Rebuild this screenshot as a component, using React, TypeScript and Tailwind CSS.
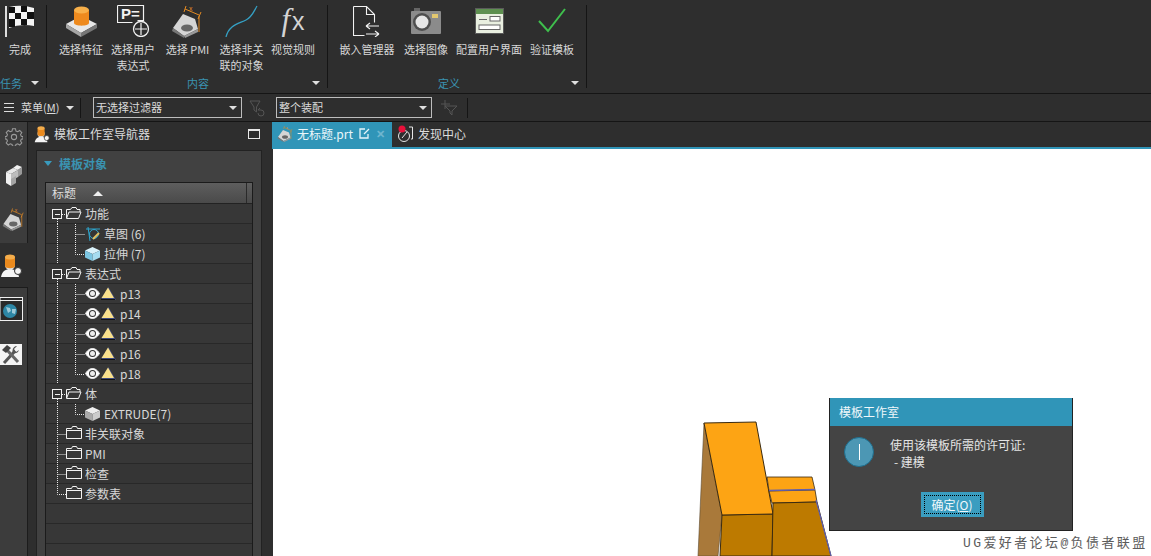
import React from 'react';

const FONT = "font-['Noto_Sans_CJK_SC','Noto_Sans',sans-serif]";

const Flag = () => (
  <svg width="30" height="32" viewBox="0 0 30 32">
    <rect x="0" y="1" width="2" height="31" fill="#ddd" />
    <path d="M4 2 Q16 -1 29 3 L29 21 Q16 18 4 23Z" fill="#f4f4f4" />
    <path d="M4 2h6v6H4zM16 1h6v6h-6zM10 8h6v6h-6zM22 7h7v7h-7zM4 14h6v8H4zM16 14h6v6h-6z" fill="#111" />
  </svg>
);

const Feature = () => (
  <svg width="33" height="32" viewBox="0 0 33 32">
    <path d="M1 19 L16 11 L32 19 L16 28Z" fill="#e8e8e8" />
    <path d="M1 19 L16 28 L16 32 L1 23Z" fill="#a5a5a5" />
    <path d="M32 19 L16 28 L16 32 L32 23Z" fill="#777" />
    <path d="M9 5v13c0 3.500 15 3.500 15 0V5Z" fill="#ee8a1e" />
    <ellipse cx="16.500" cy="5" rx="7.500" ry="3.500" fill="#f8b04a" />
  </svg>
);

const ExprPick = () => (
  <svg width="33" height="32" viewBox="0 0 33 32" fill="none" stroke="#f2f2f2">
    <path d="M.5 .5h26v15h-6M.5 .5v17h15" strokeWidth="1.200" />
    <text x="4" y="14" fill="#f2f2f2" stroke="none" fontSize="15" fontWeight="700" fontFamily="Liberation Sans">P=</text>
    <circle cx="24" cy="24" r="7.500" strokeWidth="1.300" />
    <path d="M24 18v12M18 24h12" strokeWidth="1.200" />
  </svg>
);

const Pmi = ({ size = 34 }: { size?: number }) => (
  <svg width={size} height={size} viewBox="0 0 34 34">
    <path d="M2 24 L12 10 L24 15 L27 25 L13 32Z" fill="#d5d5d5" />
    <path d="M2 24 L13 32 L13 34 L1 27Z" fill="#777" />
    <path d="M13 32 L27 25 L27 28 L14 34Z" fill="#999" />
    <ellipse cx="16" cy="24" rx="6" ry="3.500" fill="#666" />
    <path d="M14 5 L28 11M15 2 L13 8M30 8 L27 15M28 12 V28" stroke="#e38a23" strokeWidth="1" fill="none" />
    <text x="18" y="7" fill="#e38a23" fontSize="7" fontFamily="Liberation Sans">x</text>
  </svg>
);

const Curve = () => (
  <svg width="36" height="32" viewBox="0 0 36 32" fill="none">
    <path d="M2 32 C5 20 14 19 22 15 C28 12 30 6 33 1" stroke="#35a0c4" strokeWidth="1.300" />
  </svg>
);

const FxMark = () => (
  <span className="text-[#d4d4d4] leading-[32px] whitespace-nowrap">
    <span className="font-['Liberation_Serif'] italic text-[31px]">f</span>
    <span className="font-['Liberation_Sans'] font-light text-[25px] ml-[2px]">x</span>
  </span>
);

const DocEmbed = () => (
  <svg width="28" height="31" viewBox="0 0 28 31" fill="none" stroke="#f2f2f2" strokeWidth="1.100">
    <path d="M.5 .5h13l8 8v8M13.500 .5v8h8M.5 .5v29h11" />
    <path d="M13 20h13M13 20l4-3M13 20l4 3M13 28h13M26 28l-4-3M26 28l-4 3" />
  </svg>
);

const Camera = () => (
  <svg width="32" height="26" viewBox="0 0 32 26">
    <rect x="4" y="0" width="6" height="5" fill="#666" />
    <rect x="1" y="3" width="30" height="23" rx="1" fill="#8b8b8b" />
    <circle cx="12" cy="14" r="9" fill="#4e4e4e" />
    <circle cx="12" cy="14" r="6.500" fill="#e6e6e6" />
    <rect x="22" y="6" width="6" height="4" fill="#e3c870" />
  </svg>
);

const UiWindow = () => (
  <svg width="29" height="26" viewBox="0 0 29 26">
    <rect x="0.500" y="0.500" width="28" height="25" fill="#e9efe0" stroke="#5a5a5a" />
    <rect x="1" y="1" width="27" height="5" fill="#5e9050" />
    <path d="M4 11h8v1H4z" fill="#666" />
    <rect x="15" y="8.500" width="10" height="4.500" fill="#fff" stroke="#666" />
    <rect x="4" y="17" width="21" height="4.500" fill="#fff" stroke="#666" />
  </svg>
);

const Check = () => (
  <svg width="30" height="28" viewBox="0 0 30 28" fill="none">
    <path d="M2 14 L11 24 L28 2" stroke="#3fbf4d" strokeWidth="2" />
  </svg>
);

const Caret = () => <span className="inline-block border-x-[4px] border-t-[4px] border-x-transparent border-t-[#e0e0e0]" />;

type RibbonItem = { w: string; lines: string[]; icon: React.ReactNode };

const GROUP_2: RibbonItem[] = [
  { w: 'w-[52px]', lines: ['选择特征'], icon: <Feature /> },
  { w: 'w-[52px]', lines: ['选择用户', '表达式'], icon: <ExprPick /> },
  { w: 'w-[57px]', lines: ['选择 PMI'], icon: <Pmi /> },
  { w: 'w-[51px]', lines: ['选择非关', '联的对象'], icon: <Curve /> },
  { w: 'w-[52px]', lines: ['视觉规则'], icon: <FxMark /> },
];

const GROUP_3: RibbonItem[] = [
  { w: 'w-[60px]', lines: ['嵌入管理器'], icon: <DocEmbed /> },
  { w: 'w-[58px]', lines: ['选择图像'], icon: <Camera /> },
  { w: 'w-[68px]', lines: ['配置用户界面'], icon: <UiWindow /> },
  { w: 'w-[58px]', lines: ['验证模板'], icon: <Check /> },
];

function RibbonButton({ item }: { item: RibbonItem }) {
  return (
    <div className={`${item.w} flex flex-col items-center shrink-0`}>
      <div className="h-[36px] pb-[4px] flex items-center justify-center">{item.icon}</div>
      <div className="text-[11px] leading-[16px] text-center text-[#d8d8d8] whitespace-nowrap">
        {item.lines.map((l) => (
          <div key={l}>{l}</div>
        ))}
      </div>
    </div>
  );
}

function RibbonGroup({ width, pad, label, labelClass, items, children }: { width: string; pad: string; label: string; labelClass: string; items?: RibbonItem[]; children?: React.ReactNode }) {
  return (
    <div className={`${width} h-[83px] mt-[5px] border-r border-[#151515] flex flex-col shrink-0`}>
      <div className={`${pad} h-[71px] flex`}>
        {items?.map((i) => <RibbonButton key={i.lines[0]} item={i} />)}
        {children}
      </div>
      <div className="relative h-[12px] text-[11px] leading-[15px] text-[#3a93b1]">
        <span className={labelClass}>{label}</span>
        <span className="absolute right-[7px] top-[5px] flex"><Caret /></span>
      </div>
    </div>
  );
}

function Ribbon() {
  return (
    <div className="h-[94px] bg-[#2e2e2e] border-b border-[#151515] flex">
      <RibbonGroup width="w-[47px]" pad="pl-[3px]" label="任务" labelClass="block" items={undefined}>
        <div className="w-[34px] flex flex-col items-center">
          <div className="h-[36px] pb-[4px] flex items-center"><Flag /></div>
          <div className="text-[11px] leading-[16px] text-[#d8d8d8] whitespace-nowrap">完成</div>
        </div>
      </RibbonGroup>
      <RibbonGroup width="w-[281px]" pad="pl-[8px]" label="内容" labelClass="block text-center pl-[22px]" items={GROUP_2} />
      <RibbonGroup width="w-[259px]" pad="pl-[9px]" label="定义" labelClass="block text-center pr-[16px]" items={GROUP_3} />
    </div>
  );
}

function Toolbar() {
  return (
    <div className="h-[28px] bg-[#2e2e2e] border-b border-[#151515] flex items-center text-[#dcdcdc] text-[11px]">
      <svg width="10" height="9" viewBox="0 0 10 9" className="ml-[4px]" stroke="#ddd"><path d="M0 .5h10M0 4.500h10M0 8.500h10" /></svg>
      <span className="ml-[7px] w-[45px] whitespace-nowrap">菜单(<span className="underline">M</span>)</span>
      <Caret />
      <span className="ml-[6px] w-px h-[20px] bg-[#151515]" />
      <div className="ml-[12px] w-[149px] h-[21px] border border-[#bdbdbd] flex items-center justify-between pl-[2px] pr-[4px]">
        <span>无选择过滤器</span><Caret />
      </div>
      <svg width="18" height="18" viewBox="0 0 18 18" className="ml-[7px]" fill="none" stroke="#555"><path d="M1 2h10L7.500 8v5L5 11V8ZM9 14a3 3 0 1 0 3-3H9l2-2" /></svg>
      <div className="ml-[9px] w-[156px] h-[21px] border border-[#bdbdbd] flex items-center justify-between pl-[2px] pr-[4px]">
        <span>整个装配</span><Caret />
      </div>
      <svg width="18" height="18" viewBox="0 0 18 18" className="ml-[8px]" fill="none" stroke="#555"><path d="M1 5h9M5 1v9M5 7h12l-5 5v4l-2-2v-2Z" /></svg>
      <span className="ml-[9px] w-px h-[20px] bg-[#151515]" />
    </div>
  );
}

const Gear = () => (
  <svg width="18" height="18" viewBox="0 0 24 24" fill="none" stroke="#9a9a9a" strokeWidth="1.400">
    <circle cx="12" cy="12" r="3.500" />
    <path d="M10 1h4l.6 3 2.400 1 2.600-1.700 2.800 2.800L20.700 8.700l1 2.300 2.300.5v3l-2.300.5-1 2.300 1.700 2.600-2.800 2.800-2.600-1.700-2.400 1-.6 2.500h-4l-.6-2.500-2.400-1-2.600 1.700-2.800-2.800 1.700-2.600-1-2.300-2.300-.5v-3l2.300-.5 1-2.300-1.700-2.600 2.800-2.800L7 5l2.400-1Z" />
  </svg>
);

const Blocks = () => (
  <svg width="16" height="21" viewBox="0 0 16 21">
    <path d="M7 3 11 0 16 2 12 5Z" fill="#f2f2f2" />
    <path d="M12 5 16 2V9L12 12Z" fill="#999" />
    <path d="M0 7 7 3 12 5 5 9Z" fill="#e8e8e8" />
    <path d="M5 9 12 5V12L5 16Z" fill="#bdbdbd" />
    <path d="M0 7 5 9V21L0 18Z" fill="#f0f0f0" />
    <path d="M5 14 10 11V18L5 21Z" fill="#a5a5a5" />
  </svg>
);

const UserTool = ({ size = 24 }: { size?: number }) => (
  <svg width={size} height={size} viewBox="0 0 24 24">
    <path d="M1 23c1-6 5-8 9-8s8 2 9 8Z" fill="#f5f5f5" />
    <circle cx="10" cy="11" r="5" fill="#e0e0e0" />
    <path d="M5 3v9c0 3 10 3 10 0V3Z" fill="#ea8a1e" />
    <ellipse cx="10" cy="3" rx="5" ry="2.500" fill="#f4ad4b" />
    <circle cx="18" cy="17" r="3.500" fill="#f5f5f5" stroke="#333" />
  </svg>
);

const GlobeWindow = () => (
  <svg width="23" height="24" viewBox="0 0 23 24">
    <rect x="0" y="0.500" width="22.500" height="23" fill="#2a2a2a" stroke="#f0f0f0" />
    <path d="M0 3.500h23" stroke="#f0f0f0" />
    <circle cx="10" cy="14" r="7" fill="#2d87a6" />
    <path d="M6 10l4 1 1 3-3 2zM12 12l4 0-1 5-3-1z" fill="#9cc9d8" />
  </svg>
);

const Tools = () => (
  <svg width="22" height="21" viewBox="0 0 22 21">
    <rect width="22" height="21" fill="#f4f4f4" />
    <path d="M4 19 15 7" stroke="#555" strokeWidth="3" />
    <path d="M13 9a5 5 0 0 1 3-7l1 0-3 3 2 3 3-2a5 5 0 0 1-6 3Z" fill="#555" />
    <path d="M18 18 7 6" stroke="#666" strokeWidth="3" />
    <path d="M2 6 7 1l4 3-5 5Z" fill="#444" />
  </svg>
);

function Sidebar() {
  return (
    <div className="w-[36px] flex flex-col shrink-0 bg-[#2e2e2e]">
      <div className="h-[121px] w-[28px] bg-[#3c3c3c] border-r border-[#1c1c1c] flex flex-col items-center">
        <div className="h-[30px] flex items-center"><Gear /></div>
        <div className="h-[46px] flex items-center"><Blocks /></div>
        <div className="h-[41px] flex items-center"><Pmi size={24} /></div>
      </div>
      <div className="h-[44px] w-[28px] flex items-center justify-start pt-[2px]"><UserTool /></div>
      <div className="flex-1 w-[28px] bg-[#3c3c3c] border-r border-t border-[#1c1c1c] flex flex-col items-start">
        <div className="mt-[9px]"><GlobeWindow /></div>
        <div className="mt-[23px]"><Tools /></div>
      </div>
    </div>
  );
}

const Folder = ({ open }: { open: boolean }) =>
  open ? (
    <g fill="none" stroke="#f2f2f2">
      <path d="M20.500 14V5.500h4l1.500-2h4l1 2h3v2.500" />
      <path d="M20.500 14.500h12l2.500-6.500h-12l-2.500 6.500" />
    </g>
  ) : (
    <g fill="none" stroke="#f2f2f2">
      <path d="M20.500 4.500h5l1-2h4l1 2h4v10h-15Z" />
      <path d="M20.500 6.500h15" />
    </g>
  );

// one row's connectors: kind picks the dotted lines drawn in the 39px gutter
function Guide({ kind, last }: { kind: 'root' | 'plain' | 'child'; last?: boolean }) {
  const dot = { stroke: '#e8e8e8', strokeDasharray: '1 1', fill: 'none' };
  return (
    <svg width="39" height="20" viewBox="0 0 39 20" className="shrink-0">
      {kind === 'root' && (
        <>
          <path d="M11.500 15v5" {...dot} />
          <rect x="6.500" y="5.500" width="9" height="9" fill="#333" stroke="#f0f0f0" />
          <path d="M9 10.500h5" stroke="#f0f0f0" />
          <path d="M16 10.500h4" {...dot} />
          <Folder open />
        </>
      )}
      {kind === 'plain' && (
        <>
          <path d={last ? 'M11.500 0v10.500h9' : 'M11.500 0v20M11.500 10.500h9'} {...dot} />
          <Folder open={false} />
        </>
      )}
      {kind === 'child' && (
        <>
          <path d="M11.500 0v20" {...dot} />
          <path d={last ? 'M29.500 0v10.500h9' : 'M29.500 0v20M29.500 10.500h9'} {...dot} />
        </>
      )}
    </svg>
  );
}

const Eye = () => (
  <svg width="15" height="11" viewBox="0 0 15 11" className="shrink-0">
    <path d="M.5 5.500C3 1.500 5.500.5 7.500.5s4.500 1 7 5c-2.500 4-5 5-7 5s-4.500-1-7-5Z" fill="#fff" stroke="#eee" />
    <circle cx="7.500" cy="5.500" r="3.500" fill="#333" />
    <circle cx="7.500" cy="5.500" r="2.500" fill="#eee" />
  </svg>
);

const Warn = () => (
  <svg width="15" height="13" viewBox="0 0 15 13" className="shrink-0 ml-px">
    <path d="M7.500 0 15 13H0Z" fill="#3e4a7c" />
    <path d="M7 0.500 13 11H0.500Z" fill="#f9e08c" />
    <path d="M0 12h14v1H0Z" fill="#111" />
  </svg>
);

const Sketch = () => (
  <svg width="16" height="16" viewBox="0 0 16 16" fill="none" stroke="#2ea7cf" className="shrink-0">
    <path d="M1 3h14M3 1l2 14" />
    <circle cx="9" cy="8" r="4.500" />
    <path d="M8 13l6-6" stroke="#e3c060" strokeWidth="2" />
  </svg>
);

const Extrude = ({ tint }: { tint: 'blue' | 'gray' }) => (
  <svg width="15" height="14" viewBox="0 0 15 14" className="shrink-0">
    <path d="M7.500 0 15 3.500 7.500 7 0 3.500Z" fill={tint === 'blue' ? '#d9f2fb' : '#eee'} />
    <path d="M0 3.500 7.500 7v7L0 10.500Z" fill={tint === 'blue' ? '#7cc6e2' : '#aaa'} />
    <path d="M15 3.500 7.500 7v7l7.500-3.500Z" fill={tint === 'blue' ? '#a6dcf0' : '#ccc'} />
  </svg>
);

type Row = { label: string; kind: 'root' | 'plain' | 'child'; last?: boolean; icons?: React.ReactNode };
const p = (label: string, last?: boolean): Row => ({
  label,
  kind: 'child',
  last,
  icons: <div className="flex items-center w-[35px]"><Eye /><Warn /></div>,
});

const ROWS: Row[] = [
  { label: '功能', kind: 'root' },
  { label: '草图 (6)', kind: 'child', icons: <div className="w-[19px]"><Sketch /></div> },
  { label: '拉伸 (7)', kind: 'child', last: true, icons: <div className="w-[19px]"><Extrude tint="blue" /></div> },
  { label: '表达式', kind: 'root' },
  p('p13'),
  p('p14'),
  p('p15'),
  p('p16'),
  p('p18', true),
  { label: '体', kind: 'root' },
  { label: 'EXTRUDE(7)', kind: 'child', last: true, icons: <div className="w-[19px]"><Extrude tint="gray" /></div> },
  { label: '非关联对象', kind: 'plain' },
  { label: 'PMI', kind: 'plain' },
  { label: '检查', kind: 'plain' },
  { label: '参数表', kind: 'plain', last: true },
];

function Navigator() {
  return (
    <div className="w-[236px] flex flex-col shrink-0 bg-[#2e2e2e]">
      <div className="h-[28px] pb-[4px] flex items-center">
        <div className="w-[18px] flex justify-start -ml-[2px]"><UserTool size={17} /></div>
        <span className="ml-[2px] flex-1 text-[12px] text-[#dcdcdc] whitespace-nowrap">模板工作室导航器</span>
        <span className="w-[12px] h-[10px] border border-[#e8e8e8] border-t-2 mr-[12px]" />
      </div>
      <div className="w-[226px] flex-1 bg-[#414141] border border-b-0 border-[#222] flex flex-col overflow-hidden">
        <div className="h-[31px] pb-[6px] flex items-center pl-[7px] shrink-0">
          <span className="border-x-[4px] border-t-[5px] border-x-transparent border-t-[#3a9bbd]" />
          <span className="ml-[7px] text-[12px] font-bold text-[#3a93b1]">模板对象</span>
        </div>
        <div className="ml-[8px] w-[208px] flex-1 bg-[#373737] border border-b-0 border-[#1b1b1b] flex flex-col">
          <div className="h-[21px] bg-gradient-to-b from-[#5e5e5e] to-[#4a4a4a] border-b border-[#222] flex items-center pl-[6px] text-[12px] text-[#dcdcdc] shrink-0 relative">
            标题
            <span className="ml-[17px] border-x-[5px] border-b-[5px] border-x-transparent border-b-[#eee]" />
            <span className="absolute right-[5px] top-0 bottom-0 w-px bg-[#2a2a2a]" />
          </div>
          {ROWS.map((r, i) => (
            <div key={r.label} className={`h-[20px] border-b border-[#282828] flex items-center text-[12px] text-[#d8d8d8] shrink-0 ${i % 2 ? 'bg-[#353535]' : 'bg-[#373737]'}`}>
              <Guide kind={r.kind} last={r.last} />
              {r.icons}
              <span className="whitespace-nowrap">{r.label}</span>
            </div>
          ))}
          {[0, 1, 2].map((i) => (
            <div key={i} className="h-[20px] border-b border-[#282828] shrink-0" />
          ))}
        </div>
      </div>
    </div>
  );
}

function Tabs() {
  return (
    <div className="h-[27px] bg-[#2e2e2e] border-b-2 border-[#3095b8] flex items-center text-[12px] shrink-0">
      <div className="h-full w-[120px] bg-[#3095b8] flex items-center pl-[5px] pb-[2px] text-[#eaf6fa]">
        <Pmi size={17} />
        <span className="ml-[3px]">无标题.prt</span>
        <svg width="11" height="11" viewBox="0 0 11 11" fill="none" stroke="#e6f5fa" strokeWidth="1.300" className="ml-[6px]"><path d="M9 6v4H1V1h5M5 6l5-5" /></svg>
        <span className="ml-[6px] text-[#6fb6cf] text-[11px] font-bold leading-none">✕</span>
      </div>
      <svg width="17" height="18" viewBox="0 0 17 18" className="ml-[5px] mb-[2px]" fill="none" stroke="#e6e6e6">
        <circle cx="7" cy="11" r="5.500" />
        <path d="M5 13l5-6M12 2h3.500v12H14" />
        <circle cx="5" cy="4" r="3.500" fill="#e8103a" stroke="none" />
      </svg>
      <span className="ml-[4px] mb-[2px] text-[#dcdcdc]">发现中心</span>
    </div>
  );
}

function Dialog() {
  return (
    <div className="absolute left-[557px] top-[276px] w-[244px] h-[133px] bg-[#444444] border border-t-0 border-[#222] text-[#e4e4e4] text-[12px]">
      <div className="h-[28px] bg-[#3095b8] flex items-center pl-[9px] text-[#f0f8fb]">模板工作室</div>
      <div className="flex mt-[11px] pl-[14px]">
        <div className="w-[30px] h-[30px] rounded-full bg-[#4c97b4] border border-[#1f6f8e] flex items-center justify-center shrink-0">
          <span className="w-px h-[16px] bg-white" />
        </div>
        <div className="ml-[16px] leading-[17px] -mt-[1px]">
          <div>使用该模板所需的许可证:</div>
          <div className="pl-[4px]">- 建模</div>
        </div>
      </div>
      <div className="mt-[22px] flex justify-center pl-[2px]">
        <div className="w-[63px] h-[25px] bg-[#3a9dc0] p-[3px]">
          <div className="h-full border border-dotted border-black flex items-center justify-center text-[#f0f8fb]">
            确定(<span className="underline">O</span>)
          </div>
        </div>
      </div>
    </div>
  );
}

function Model() {
  return (
    <svg width="140" height="135" viewBox="695 421 140 135" className="absolute left-[423px] top-[299px]">
      <path d="M704 423 722 515 718 556H698Z" fill="#a9793a" stroke="#5a4a30" strokeWidth=".6" />
      <path d="M722 515 773 514 772 556H720Z" fill="#bd7a00" stroke="#3a2a10" />
      <path d="M704 423 756 422 773 514 722 515Z" fill="#fda414" stroke="#3a2a10" />
      <path d="M767 477 812 477 815 490 769 491Z" fill="#fda414" stroke="#3a2a10" strokeWidth=".8" />
      <path d="M769 491 815 490 817 502 772 503Z" fill="#fda414" stroke="#3a2a10" strokeWidth=".8" />
      <path d="M769 490.500 815 489.500" stroke="#6060b0" strokeWidth="1.500" />
      <path d="M773 503 817 502 831 556H772Z" fill="#bd7a00" stroke="#3a2a10" />
      <path d="M816 500 831 556" stroke="#6060b0" strokeWidth="1.200" />
    </svg>
  );
}

export default function App() {
  return (
    <div className={`${FONT} w-[1151px] h-[556px] overflow-hidden flex flex-col bg-[#2e2e2e]`}>
      <Ribbon />
      <Toolbar />
      <div className="flex-1 flex min-h-0">
        <Sidebar />
        <Navigator />
        <div className="flex-1 flex flex-col min-w-0 relative">
          <Tabs />
          <div className="flex-1 bg-white ml-px" />
          <Model />
          <Dialog />
          <div className="absolute left-[691px] top-[413px] font-['Liberation_Mono','Noto_Sans_CJK_SC',monospace] text-[13px] leading-[18px] tracking-[2.4px] text-[#5c5c5c] whitespace-nowrap">UG爱好者论坛@负债者联盟</div>
        </div>
      </div>
    </div>
  );
}
